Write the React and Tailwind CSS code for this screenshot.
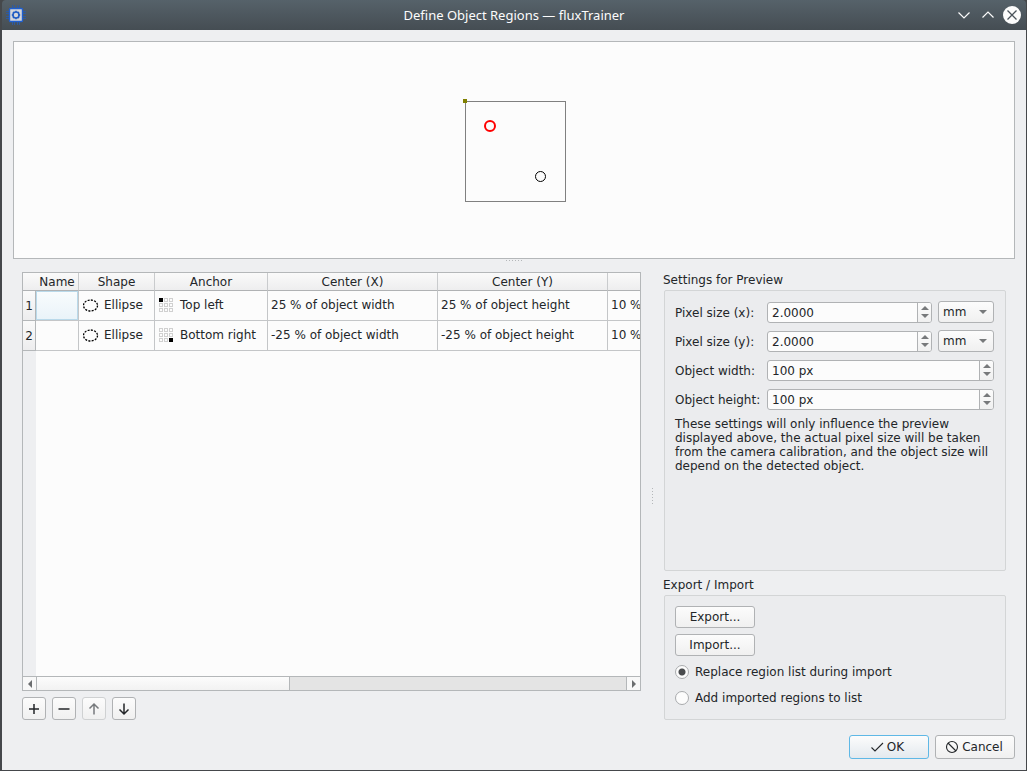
import React, { useState } from "react";

const REGIONS = [
  { id: 1, name: "", shape: "Ellipse", anchor: "Top left", cell: 0, x: "25 % of object width", y: "25 % of object height", width: "10 %" },
  { id: 2, name: "", shape: "Ellipse", anchor: "Bottom right", cell: 8, x: "-25 % of object width", y: "-25 % of object height", width: "10 %" },
];

const COLUMNS = ["Name", "Shape", "Anchor", "Center (X)", "Center (Y)", ""];

const FACE = "bg-linear-to-b from-[#fcfcfc] to-[#f0f0f0] border border-[#b0b2b4] rounded-[3px]";

function AppIcon() {
  return (
    <svg width="20" height="20" viewBox="0 0 20 20" aria-hidden="true">
      <path d="M6.5 0V20M8.5 0V20M11.5 0V20M13.5 0V20M0 6.5H20M0 8.5H20M0 11.5H20M0 13.5H20" stroke="#2f5a9c" strokeWidth="1" />
      <rect x="3.5" y="3.5" width="13" height="13" rx="1" fill="#d4d6da" stroke="#1f5fd0" strokeWidth="1.4" />
      <circle cx="10" cy="10" r="3" fill="#d4d6da" stroke="#1f5cc4" strokeWidth="1.6" />
      <path d="M10 5.8V7M10 13V14.2M5.8 10H7M13 10H14.2M7 7L7.8 7.8M12.2 12.2L13 13M13 7L12.2 7.8M7 13L7.8 12.2" stroke="#1f5cc4" strokeWidth="1.4" />
    </svg>
  );
}

function TitleBar() {
  return (
    <header className="flex h-[30px] shrink-0 items-center rounded-t bg-linear-to-b from-[#56626a] to-[#454d53] px-1 text-[#fcfcfc]">
      <div className="flex w-20 items-center">
        <AppIcon />
      </div>
      <h1 className="flex-1 text-center font-['Noto_Sans',sans-serif] text-[13px]">Define Object Regions — fluxTrainer</h1>
      <div className="flex w-20 items-center justify-end gap-1">
        <button type="button" aria-label="Minimize">
          <svg width="20" height="20" viewBox="0 0 20 20" fill="none" stroke="currentColor" strokeWidth="1.2">
            <path d="M4.5 7.5L10 13L15.5 7.5" />
          </svg>
        </button>
        <button type="button" aria-label="Maximize">
          <svg width="20" height="20" viewBox="0 0 20 20" fill="none" stroke="currentColor" strokeWidth="1.2">
            <path d="M4.5 12.5L10 7L15.5 12.5" />
          </svg>
        </button>
        <button type="button" aria-label="Close">
          <svg width="20" height="20" viewBox="0 0 20 20" fill="none">
            <circle cx="10" cy="10" r="9" fill="#fcfcfc" />
            <path d="M5.5 5.5L14.5 14.5M14.5 5.5L5.5 14.5" stroke="#4a535a" strokeWidth="1.3" />
          </svg>
        </button>
      </div>
    </header>
  );
}

function Preview() {
  return (
    <div className="flex h-[218px] items-center justify-center border border-[#b4b7b9] bg-[#fcfcfc]">
      <svg width="110" height="110" viewBox="0 0 110 110" fill="none" role="img" aria-label="Region preview">
        <rect x="6.5" y="6.5" width="100" height="100" stroke="#808080" />
        <rect x="4" y="4" width="4" height="4" fill="#808000" />
        <circle cx="31" cy="31" r="5" stroke="#ff0000" strokeWidth="2" />
        <circle cx="81.5" cy="81.5" r="5" stroke="#000000" />
      </svg>
    </div>
  );
}

function EllipseIcon() {
  return (
    <svg width="16" height="16" viewBox="0 0 16 16" fill="none" aria-hidden="true">
      <ellipse cx="7.5" cy="8.5" rx="7" ry="5.5" stroke="#000" strokeWidth="1.3" strokeDasharray="2 1.28" />
    </svg>
  );
}

function AnchorIcon({ active }) {
  return (
    <svg width="16" height="16" viewBox="0 0 16 16" fill="none" aria-hidden="true">
      {Array.from({ length: 9 }, (_, i) => {
        const x = 1.5 + (i % 3) * 5;
        const y = 1.5 + Math.floor(i / 3) * 5;
        return <rect key={i} x={x} y={y} width="3" height="3" stroke={i === active ? "#000" : "#d0d0d0"} fill={i === active ? "#000" : "none"} />;
      })}
    </svg>
  );
}

function ScrollBar() {
  return (
    <div className="flex h-[14px] shrink-0 border-t border-[#b4b7b9] bg-[#e4e4e4]">
      <button type="button" aria-label="Scroll left" className="flex w-[14px] items-center justify-center border-r border-[#b4b7b9] bg-[#f8f8f8]">
        <svg width="6" height="8" viewBox="0 0 6 8"><path d="M5 0V8L1 4Z" fill="#6b6d6f" /></svg>
      </button>
      <div className="flex-1">
        <div className="h-full w-[43%] border-r border-[#b4b7b9] bg-linear-to-b from-[#fcfcfc] to-[#f2f2f2]" />
      </div>
      <button type="button" aria-label="Scroll right" className="flex w-[14px] items-center justify-center border-l border-[#b4b7b9] bg-[#f8f8f8]">
        <svg width="6" height="8" viewBox="0 0 6 8"><path d="M1 0V8L5 4Z" fill="#6b6d6f" /></svg>
      </button>
    </div>
  );
}

function RegionTable() {
  const cell = "border-r border-b border-[#c4c6c8] pt-0 pr-0 pb-[2px]";
  const head = "border-r border-b border-r-[#c9cbcd] border-b-[#b0b2b4] p-0 font-normal";
  return (
    <div className="flex min-h-[419px] flex-1 flex-col border border-[#b4b7b9] bg-[#fcfcfc]">
      <div className="flex flex-1 flex-col overflow-hidden">
        <table className="w-[725px] table-fixed border-separate border-spacing-0 whitespace-nowrap">
          <colgroup>
            <col className="w-[13px]" />
            <col className="w-[43px]" />
            <col className="w-[76px]" />
            <col className="w-[113px]" />
            <col className="w-[170px]" />
            <col className="w-[170px]" />
            <col className="w-[140px]" />
          </colgroup>
          <thead>
            <tr className="h-[18px] bg-linear-to-b from-[#fafafa] to-[#ededee]">
              <td className="border-b border-[#b0b2b4] p-0" />
              {COLUMNS.map((title, i) => (
                <th key={i} scope="col" className={head}>{title}</th>
              ))}
            </tr>
          </thead>
          <tbody>
            {REGIONS.map((region) => (
              <tr key={region.id} className="h-[30px]">
                <th scope="row" className="border-r border-b border-[#b4b7b9] bg-linear-to-b from-[#fafafa] to-[#ededee] p-0 font-normal">{region.id}</th>
                <td className={region.id === 1 ? `${cell} bg-linear-to-b from-[#f9fcfd] to-[#e9f3f9] inset-ring inset-ring-[#b9d9ea]` : cell}>{region.name}</td>
                <td className={cell}>
                  <div className="flex items-center gap-[5px] pl-1"><EllipseIcon />{region.shape}</div>
                </td>
                <td className={cell}>
                  <div className="flex items-center gap-[6px] pl-[3px]"><AnchorIcon active={region.cell} />{region.anchor}</div>
                </td>
                <td className={`${cell} pl-[3px]`}>{region.x}</td>
                <td className={`${cell} pl-[3px]`}>{region.y}</td>
                <td className={`${cell} pl-[3px]`}>{region.width}</td>
              </tr>
            ))}
          </tbody>
        </table>
        <div className="w-[13px] flex-1 bg-[#eeeff1]" />
      </div>
      <ScrollBar />
    </div>
  );
}

function ToolButton({ label, path, disabled }) {
  return (
    <button type="button" aria-label={label} disabled={disabled} className={`${FACE} flex h-[23px] w-6 items-center justify-center text-[#232629] disabled:border-[#cfd1d2] disabled:text-[#777a7d]`}>
      <svg width="16" height="16" viewBox="0 0 16 16" fill="none" stroke="currentColor" strokeWidth="1.5" aria-hidden="true">
        <path d={path} />
      </svg>
    </button>
  );
}

function SpinBox({ id, label, value, onChange }) {
  return (
    <div className="flex h-[21px] min-w-0 flex-1 overflow-hidden rounded-[3px] border border-[#b0b2b4] bg-[#fcfcfc]">
      <input id={id} type="text" value={value} onChange={(e) => onChange(e.target.value)} className="min-w-0 flex-1 px-1 pt-px outline-none" />
      <div className="flex w-[14px] flex-col border-l border-[#b0b2b4] bg-linear-to-b from-[#fcfcfc] to-[#f0f0f0] py-px">
        <button type="button" aria-label={`Increase ${label}`} className="flex flex-1 items-center justify-center">
          <svg width="8" height="4" viewBox="0 0 8 4"><path d="M0 4H8L4 0Z" fill="#77797b" /></svg>
        </button>
        <button type="button" aria-label={`Decrease ${label}`} className="flex flex-1 items-center justify-center">
          <svg width="8" height="4" viewBox="0 0 8 4"><path d="M0 0H8L4 4Z" fill="#77797b" /></svg>
        </button>
      </div>
    </div>
  );
}

function UnitSelect({ label }) {
  return (
    <div className="relative ml-[6px] w-14">
      <select aria-label={label} defaultValue="mm" className={`${FACE} h-[22px] w-full appearance-none pl-1 outline-none`}>
        <option>mm</option>
      </select>
      <svg className="pointer-events-none absolute top-[9px] right-[7px]" width="8" height="4" viewBox="0 0 8 4"><path d="M0 0H8L4 4Z" fill="#77797b" /></svg>
    </div>
  );
}

function Field({ id, label, initial, unit }) {
  const [value, setValue] = useState(initial);
  return (
    <div className="flex h-[22px] items-center">
      <label htmlFor={id} className="w-[92px] pt-px whitespace-nowrap">{label}:</label>
      <SpinBox id={id} label={label} value={value} onChange={setValue} />
      {unit && <UnitSelect label={`${label} unit`} />}
    </div>
  );
}

function RadioOption({ label, value, mode, setMode }) {
  return (
    <label className="flex h-4 items-center gap-[6px]">
      <input
        type="radio"
        name="import-mode"
        checked={mode === value}
        onChange={() => setMode(value)}
        className="size-[14px] appearance-none rounded-full border border-[#a9abad] bg-[#fcfcfc] checked:bg-[radial-gradient(circle,#4a4c4e_0_3px,#fcfcfc_4px)]"
      />
      {label}
    </label>
  );
}

const GROUP = "ml-px rounded-[2px] border border-[#d3d5d6] bg-[#ebecee] pr-[11px] pl-[10px]";

export default function App() {
  const [mode, setMode] = useState("replace");

  return (
    <div className="flex min-h-screen flex-col bg-[#45484b] pr-px pb-px pl-[2px] font-['DejaVu_Sans',sans-serif] text-[12px] leading-[14px] text-[#232629]">
      <TitleBar />
      <main className="flex flex-1 flex-col bg-[#eeeff1] p-[11px]">
        <Preview />
        <div className="flex h-[13px] justify-center pt-px">
          <div className="h-px w-[17px] bg-[repeating-linear-gradient(90deg,#b4b7b9_0_1px,transparent_1px_3px)]" />
        </div>

        <div className="flex flex-1 px-[9px]">
          <section className="flex min-w-0 flex-1 flex-col">
            <RegionTable />
            <div className="mt-[6px] flex gap-[6px]">
              <ToolButton label="Add region" path="M8 3V13M3 8H13" />
              <ToolButton label="Remove region" path="M2.5 8H13.5" />
              <ToolButton label="Move up" path="M8 13.5V3M3.5 7.5L8 3L12.5 7.5" disabled />
              <ToolButton label="Move down" path="M8 2.5V13M3.5 8.5L8 13L12.5 8.5" />
            </div>
          </section>

          <div className="flex w-[22px] items-center justify-center">
            <div className="h-[17px] w-px bg-[repeating-linear-gradient(180deg,#b4b7b9_0_1px,transparent_1px_3px)]" />
          </div>

          <section className="flex w-[343px] flex-col">
            <h2 className="pt-px">Settings for Preview</h2>
            <div className={`${GROUP} mt-[3px] flex flex-1 flex-col gap-[7px] py-[10px]`}>
              <Field id="pixel-x" label="Pixel size (x)" initial="2.0000" unit />
              <Field id="pixel-y" label="Pixel size (y)" initial="2.0000" unit />
              <Field id="object-width" label="Object width" initial="100 px" />
              <Field id="object-height" label="Object height" initial="100 px" />
              <p>
                These settings will only influence the preview displayed above, the actual pixel size will be taken from the camera calibration, and the object size will depend on the detected object.
              </p>
            </div>
            <h2 className="mt-[7px]">Export / Import</h2>
            <div className={`${GROUP} mt-[3px] flex h-[125px] flex-col items-start pt-[10px]`}>
              <button type="button" className={`${FACE} h-[22px] w-20`}>Export...</button>
              <button type="button" className={`${FACE} mt-[6px] h-[22px] w-20`}>Import...</button>
              <div className="mt-2 flex flex-col gap-[10px]">
                <RadioOption label="Replace region list during import" value="replace" mode={mode} setMode={setMode} />
                <RadioOption label="Add imported regions to list" value="add" mode={mode} setMode={setMode} />
              </div>
            </div>
          </section>
        </div>

        <footer className="mt-[15px] flex justify-end gap-[6px]">
          <button type="button" className="flex h-6 w-20 items-center justify-center gap-[3px] rounded-[3px] border border-[#5fb8e6] bg-linear-to-b from-[#fcfcfc] to-[#e3e9ee] pr-1">
            <svg width="14" height="14" viewBox="0 0 14 14" fill="none" stroke="#232629" strokeWidth="1.1" aria-hidden="true">
              <path d="M1.5 7.5L5 11L13 3" />
            </svg>
            OK
          </button>
          <button type="button" className={`${FACE} flex h-6 w-20 items-center justify-center gap-[3px] pr-[2px]`}>
            <svg width="14" height="14" viewBox="0 0 14 14" fill="none" stroke="#232629" strokeWidth="1.1" aria-hidden="true">
              <circle cx="7" cy="7" r="5.5" />
              <path d="M3 3L11 11" />
            </svg>
            Cancel
          </button>
        </footer>
      </main>
    </div>
  );
}
